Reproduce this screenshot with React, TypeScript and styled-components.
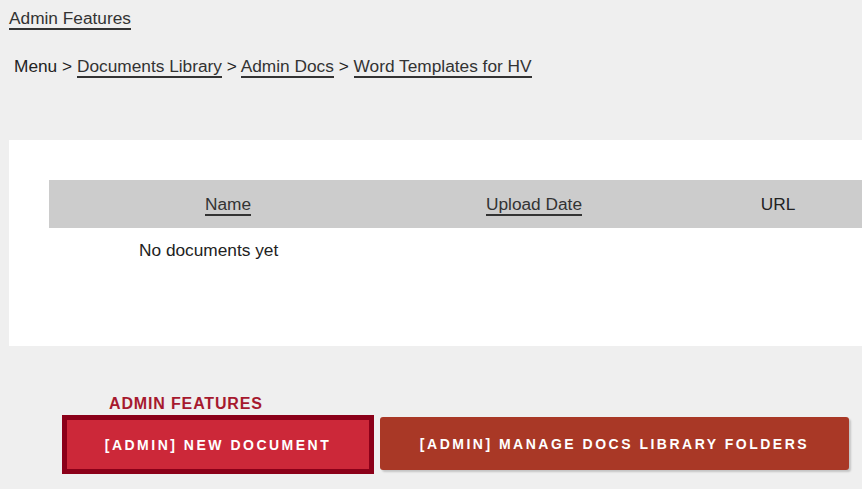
import React from 'react'
import styled, { createGlobalStyle } from 'styled-components'

const GlobalStyle = createGlobalStyle`
  html, body {
    margin: 0;
    padding: 0;
    background: #efefef;
    overflow: hidden;
  }
  body {
    font-family: 'Liberation Sans', Arial, sans-serif;
    font-size: 17.3px;
    color: #222;
  }
`

const documents: { name: string; uploaded: string; url: string }[] = []

const App: React.FC = () => {
  return (
    <>
      <GlobalStyle />
      <Page>
        <TopLine>
          <UnderLink href="#">Admin Features</UnderLink>
        </TopLine>
        <Breadcrumb>
          Menu{' > '}
          <UnderLink href="#">Documents Library</UnderLink>
          {' > '}
          <UnderLink href="#">Admin Docs</UnderLink>
          {' > '}
          <UnderLink href="#">Word Templates for HV</UnderLink>
        </Breadcrumb>
        <Panel>
          <DocTable>
            <colgroup>
              <col style={{ width: 358 }} />
              <col style={{ width: 254 }} />
              <col style={{ width: 234 }} />
            </colgroup>
            <thead>
              <tr>
                <HeadCell>
                  <UnderLink href="#">Name</UnderLink>
                </HeadCell>
                <HeadCell>
                  <UnderLink href="#">Upload Date</UnderLink>
                </HeadCell>
                <HeadCell>URL</HeadCell>
              </tr>
            </thead>
            <tbody>
              {documents.length === 0 ? (
                <tr>
                  <EmptyCell colSpan={3}>No documents yet</EmptyCell>
                </tr>
              ) : (
                documents.map((doc) => (
                  <tr key={doc.url}>
                    <td>{doc.name}</td>
                    <td>{doc.uploaded}</td>
                    <td>{doc.url}</td>
                  </tr>
                ))
              )}
            </tbody>
          </DocTable>
        </Panel>
        <AdminSection>
          <AdminTitle>Admin Features</AdminTitle>
          <ButtonRow>
            <AdminButton $focused>[Admin] New Document</AdminButton>
            <AdminButton>[Admin] Manage Docs Library Folders</AdminButton>
          </ButtonRow>
        </AdminSection>
      </Page>
    </>
  )
}

const Page = styled.div`
  padding: 8px 0 0 9px;
  line-height: 20px;
`

const TopLine = styled.div`
  height: 20px;
`

const UnderLink = styled.a`
  color: #333;
  text-decoration: none;
  border-bottom: 2px solid #333;
`

const Breadcrumb = styled.div`
  margin-top: 28px;
  padding-left: 5px;
  height: 20px;
  color: #222;
  white-space: pre;
`

const Panel = styled.div`
  margin-top: 64px;
  width: 926px;
  background: #fff;
  padding: 40px;
  box-sizing: border-box;
`

const DocTable = styled.table`
  width: 846px;
  border-collapse: collapse;
  table-layout: fixed;
`

const HeadCell = styled.th`
  background: #cccccc;
  height: 48px;
  padding: 0;
  font-weight: normal;
  text-align: center;
  vertical-align: middle;
  color: #222;
`

const EmptyCell = styled.td`
  padding: 12px 0 46px 90px;
  text-align: left;
  color: #222;
`

const AdminSection = styled.div`
  margin-top: 49px;
  padding-left: 53px;
`

const AdminTitle = styled.div`
  margin-left: 47px;
  color: #a6192e;
  font-weight: bold;
  font-size: 16px;
  letter-spacing: 0.85px;
  text-transform: uppercase;
  line-height: 18px;
`

const ButtonRow = styled.div`
  display: flex;
  align-items: flex-start;
  gap: 6px;
  margin-top: 2px;
`

const AdminButton = styled.button<{ $focused?: boolean }>`
  font-family: 'Liberation Sans', Arial, sans-serif;
  font-size: 14px;
  font-weight: bold;
  letter-spacing: 2.5px;
  text-transform: uppercase;
  color: #fff;
  cursor: pointer;
  box-sizing: border-box;
  padding: 0;
  ${({ $focused }) =>
    $focused
      ? `
    width: 312px;
    height: 59px;
    background: #cc2839;
    border: 5px solid #8b0019;
    border-radius: 0;
  `
      : `
    width: 469px;
    height: 53px;
    margin-top: 2px;
    background: #a93826;
    border: none;
    border-radius: 3px;
    box-shadow: 2px 2px 2px rgba(0, 0, 0, 0.18);
  `}
`

export default App
